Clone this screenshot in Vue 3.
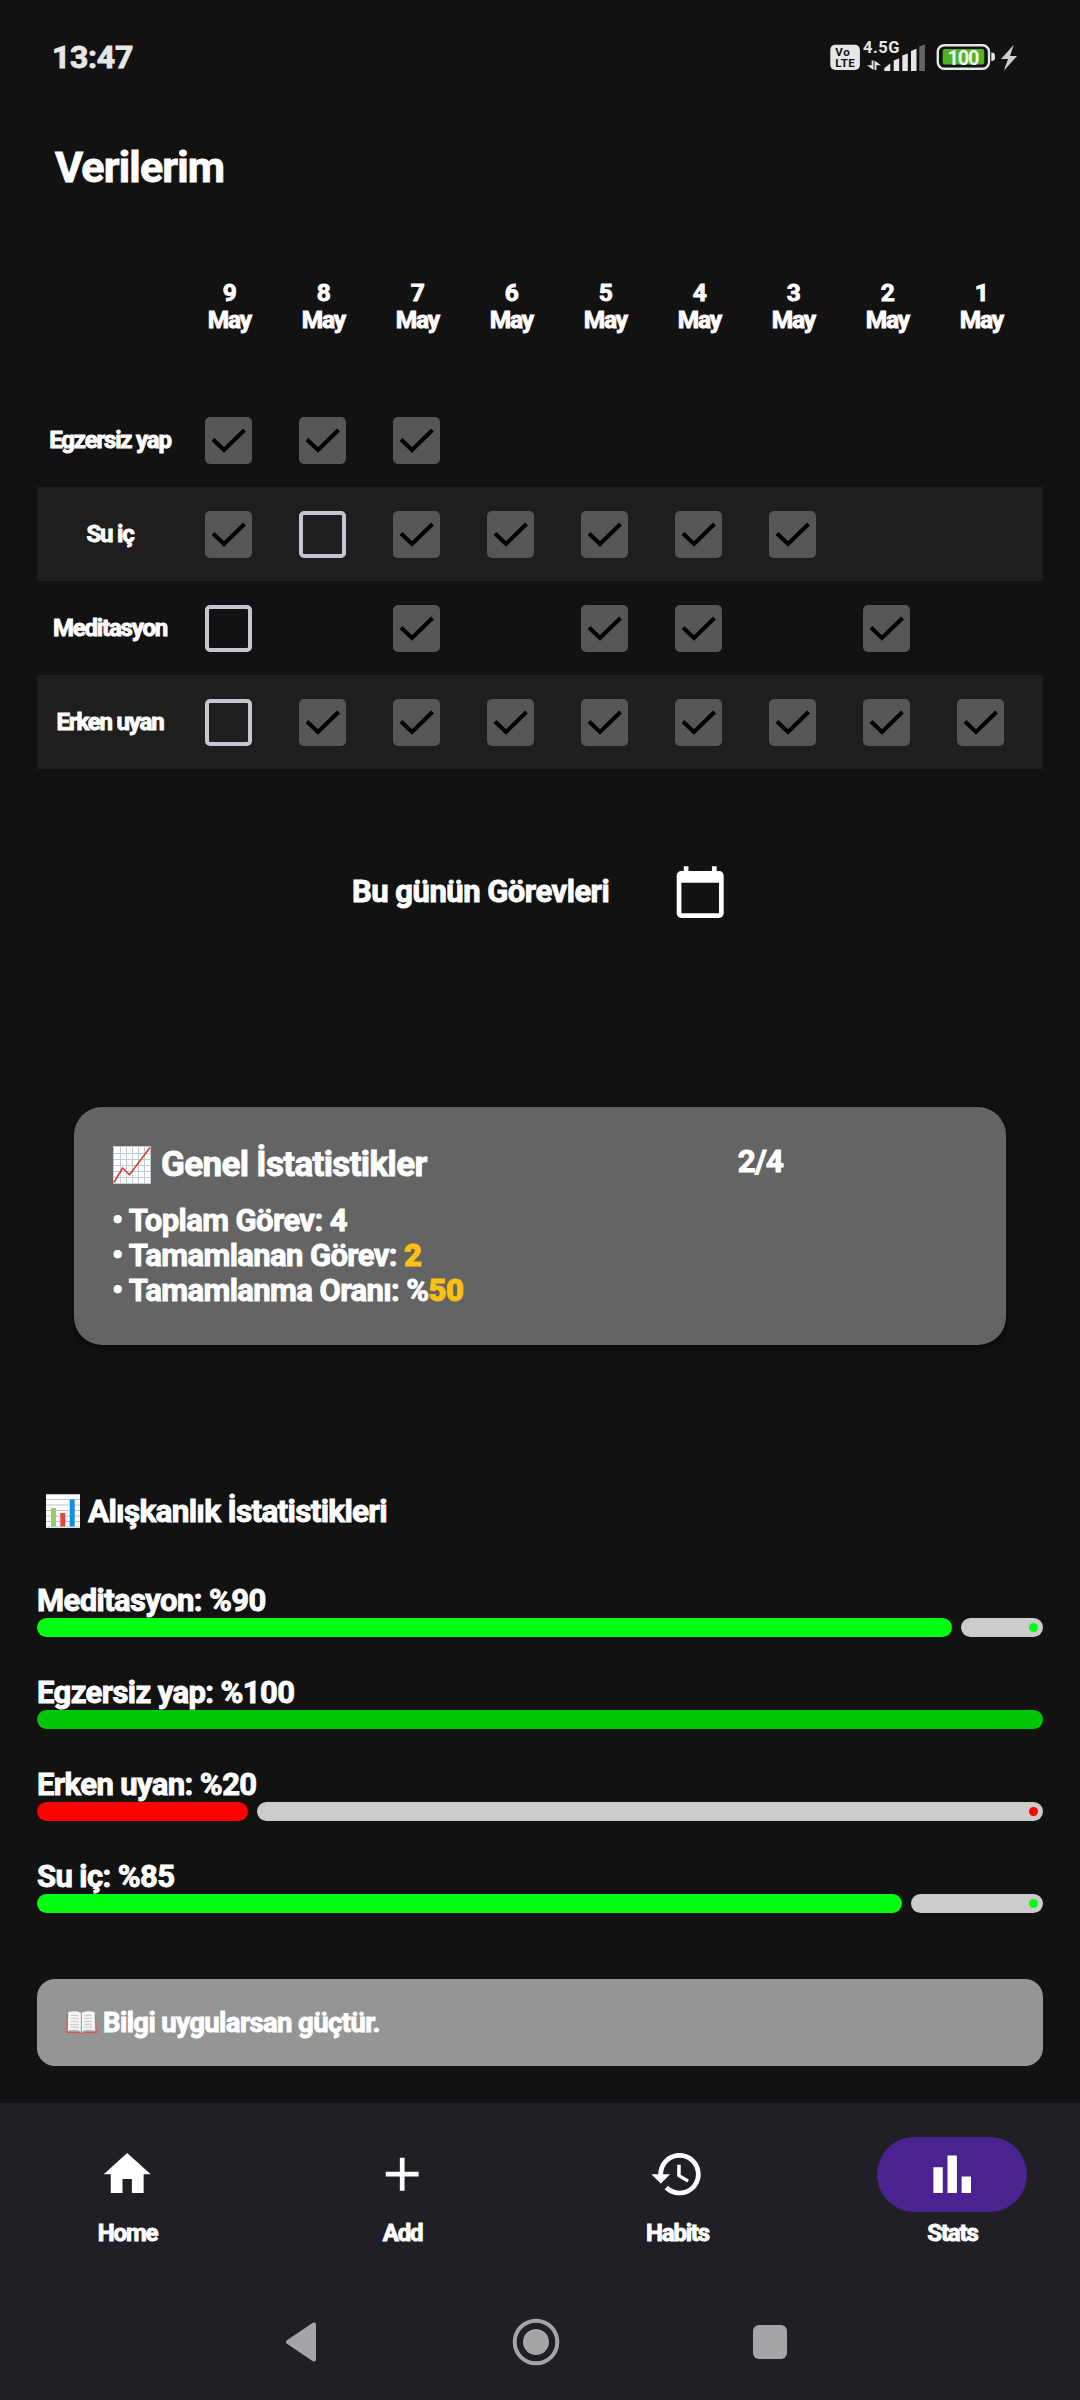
<script setup>
const days = [9, 8, 7, 6, 5, 4, 3, 2, 1]

// 1 = done, 0 = open, '-' = not scheduled
const habits = [
  { name: 'Egzersiz yap', marks: '111------' },
  { name: 'Su iç', marks: '1011111--' },
  { name: 'Meditasyon', marks: '0-1-11-1-' },
  { name: 'Erken uyan', marks: '011111111' },
]

const stats = [
  { name: 'Meditasyon', percent: 90, color: '#00ff11' },
  { name: 'Egzersiz yap', percent: 100, color: '#00c605' },
  { name: 'Erken uyan', percent: 20, color: '#ff0000' },
  { name: 'Su iç', percent: 85, color: '#00ff11' },
]

const fillWidth = (p) => (p === 100 ? '100%' : `calc(${p}% + 9.6px)`)

const tabs = [
  { label: 'Home', icon: 'M10 20v-6h4v6h5v-8h3L12 3 2 12h3v8z' },
  { label: 'Add', icon: 'M19 13h-6v6h-2v-6H5v-2h6V5h2v6h6v2z' },
  {
    label: 'Habits',
    icon: 'M13 3c-4.97 0-9 4.03-9 9H1l3.89 3.89.07.14L9 12H6c0-3.87 3.13-7 7-7s7 3.13 7 7-3.13 7-7 7c-1.93 0-3.68-.79-4.94-2.06l-1.42 1.42C8.27 19.99 10.51 21 13 21c4.97 0 9-4.03 9-9s-4.03-9-9-9zm-1 5v5l4.28 2.54.72-1.21-3.5-2.08V8H12z',
  },
  { label: 'Stats', icon: 'M4 9h4v11H4zM16 13h4v7h-4zM10 4h4v16h-4z', active: true },
]
</script>

<template>
  <div class="screen">
    <header class="status">
      <span class="clock">13:47</span>
      <svg class="status-icons" width="196" height="36" viewBox="826 38 196 36">
        <rect x="830.3" y="44.8" width="29.6" height="25.2" rx="5" fill="#e6e6e6" />
        <text class="lte" x="835.3" y="56.4" font-size="11.5" textLength="14.5">Vo</text>
        <text class="lte" x="835.3" y="67" font-size="11.5" textLength="19.5">LTE</text>
        <text class="net" x="863" y="53" font-size="16.5" textLength="36.6">4.5G</text>
        <path d="M871.6 60.5h1.9V70L867 65.300h4.600zM876.400 70h-1.900V60.500L881 65.200h-4.600z" fill="#e6e6e6" />
        <path d="M884.3 71v-3l6-4.4V71zM893.7 71V60.5l5.5-2.3V71zM902.3 71V55.5l5.5-2V71zM911 71V51l5.5-2.3V71z" fill="#e6e6e6" />
        <path d="M919.3 71V46.6l5.6-2.3V71z" fill="#666" />
        <rect x="937.8" y="45.2" width="51.2" height="23.6" rx="6.5" fill="none" stroke="#e6e6e6" stroke-width="2.4" />
        <rect x="942.7" y="49" width="41.6" height="15.6" rx="2" fill="#4fb31c" />
        <text class="charge" x="947.5" y="64.6" font-size="20" textLength="32">100</text>
        <path d="M991.3 52.6c2.5 0 3.6 1 3.6 2.5v3.5c0 1.5-1.1 2.5-3.6 2.5z" fill="#e6e6e6" />
        <path d="M1013.8 44.8L1001 59h7l-4.2 11.7L1017 56h-7z" fill="#cfcfcf" />
      </svg>
    </header>

    <h1 class="title">Verilerim</h1>

    <section class="table">
      <div class="row head">
        <span class="name"></span>
        <span v-for="d in days" :key="d" class="cell day"><span>{{ d }}</span><span>May</span></span>
      </div>
      <div v-for="(h, i) in habits" :key="h.name" class="row" :class="{ striped: i % 2 }">
        <span class="name">{{ h.name }}</span>
        <span v-for="(m, j) in h.marks" :key="j" class="cell">
          <span v-if="m === '1'" class="box done">
            <svg width="47" height="47" viewBox="0 0 47 47">
              <path d="M8 22.500L19 33L39.500 13" fill="none" stroke="#000" stroke-width="4" />
            </svg>
          </span>
          <span v-else-if="m === '0'" class="box open"></span>
        </span>
      </div>
    </section>

    <section class="today">
      <span class="today-text">Bu günün Görevleri</span>
      <svg width="56.4" height="56.4" viewBox="0 0 24 24">
        <path fill="#fff" d="M20 3h-1V1h-2v2H7V1H5v2H4c-1.1 0-2 .9-2 2v16c0 1.1.9 2 2 2h16c1.1 0 2-.9 2-2V5c0-1.1-.9-2-2-2zm0 18H4V8h16v13z" />
      </svg>
    </section>

    <section class="card">
      <div class="summary">
        <h2 class="card-title">
          <svg width="38" height="38" viewBox="0 0 38 38">
            <rect width="38" height="38" fill="#fff" />
            <path d="M.5 0v38M7.5 0v38M13.5 0v38M19.5 0v38M25.5 0v38M31.5 0v38M37.5 0v38M0 .5h38M0 7.5h38M0 13.5h38M0 19.5h38M0 25.5h38M0 31.5h38M0 37.5h38" stroke="#c3cbd0" stroke-width="1" />
            <path d="M1 36.5L9.5 22l7 6.8L37 1.5" fill="none" stroke="#db4437" stroke-width="1.7" />
          </svg>
          <span>Genel İstatistikler</span>
        </h2>
        <ul class="lines">
          <li>Toplam Görev: 4</li>
          <li>Tamamlanan Görev: <b>2</b></li>
          <li>Tamamlanma Oranı: %<b>50</b></li>
        </ul>
      </div>
      <span class="ratio">2/4</span>
    </section>

    <h2 class="section-title">
      <svg width="34" height="34" viewBox="0 0 34 34">
        <rect width="34" height="34" fill="#fff" />
        <path d="M0 .5h34M0 5.5h34M0 11h34M0 16.5h34M0 22h34M0 27.5h34M0 33h34" stroke="#b8c4c8" stroke-width="1" />
        <path d="M5 14h5v18.5H5z" fill="#9ccc65" />
        <path d="M14.3 19h5v13.5h-5z" fill="#e8453c" />
        <path d="M23.7 5.5h5v27h-5z" fill="#0f8fe6" />
      </svg>
      <span>Alışkanlık İstatistikleri</span>
    </h2>

    <section class="stats">
      <div v-for="s in stats" :key="s.name" class="stat">
        <span class="stat-name">{{ s.name }}: %{{ s.percent }}</span>
        <div class="bar">
          <span class="fill" :style="{ width: fillWidth(s.percent), background: s.color }"></span>
          <span v-if="s.percent < 100" class="rest"><i :style="{ background: s.color }"></i></span>
        </div>
      </div>
    </section>

    <section class="tip">
      <svg width="31" height="23" viewBox="0 0 31 23">
        <path d="M1 3L0 22h13c1 1 4 1 5 0h13L29.5 3z" fill="#d8574f" />
        <path d="M2 2L1.500 20.500h11.500l2.500 1.500l2.500-1.500h11.500L29 2z" fill="#a9c6cf" />
        <path d="M2.500 1C7 0 12 0 15.300 2C19 0 24 0 28.500 1L29 19.500C24 18.500 19 18.500 15.500 20.500C12 18.500 7 18.500 2 19.500z" fill="#f6f6f6" />
        <path d="M15.400 2v18.500" stroke="#90aab2" stroke-width="1.2" />
        <path d="M5 4.500q4-1 8 .5M5 7.500q4-1 8 .5M4.700 10.500q4-1 8.300.5M4.700 13.500q4-1 8.300.5M4.500 16.300q4-1 8.500.5M18 5q4-1.500 8-.5M18 8q4-1.500 8-.5M18 11q4-1.500 8.300-.5M18 14q4-1.500 8.300-.5M18 16.800q4-1.500 8.500-.5" fill="none" stroke="#c4c4c4" stroke-width="1" />
      </svg>
      <span>Bilgi uygularsan güçtür.</span>
    </section>

    <footer class="bottom">
      <nav class="tabs">
        <div v-for="t in tabs" :key="t.label" class="tab">
          <span class="pill" :class="{ active: t.active }">
            <svg width="56.4" height="56.4" viewBox="0 0 24 24"><path :d="t.icon" fill="#fff" /></svg>
          </span>
          <span class="tab-label">{{ t.label }}</span>
        </div>
      </nav>
      <div class="system">
        <svg width="32" height="48" viewBox="0 0 32 48">
          <path d="M3 24L29 6.5V41.5z" fill="#a5a5a7" stroke="#a5a5a7" stroke-width="4" stroke-linejoin="round" />
        </svg>
        <svg class="home-button" width="48" height="48" viewBox="0 0 48 48">
          <circle cx="24" cy="24" r="21.3" fill="none" stroke="#a5a5a7" stroke-width="4" />
          <circle cx="24" cy="24" r="13" fill="#a5a5a7" />
        </svg>
        <svg width="34" height="34" viewBox="0 0 34 34"><rect width="34" height="34" rx="6" fill="#a5a5a7" /></svg>
      </div>
    </footer>
  </div>
</template>

<style>
body {
  background: #121212;
}
</style>

<style scoped>
.screen {
  box-sizing: border-box;
  width: 1080px;
  height: 2400px;
  overflow: hidden;
  display: flex;
  flex-direction: column;
  background: #121212;
  color: #fff;
  font-family: Roboto, "Noto Sans", sans-serif;
  font-weight: 700;
  letter-spacing: -0.6px;
  -webkit-text-stroke: 0.9px currentColor;
}
svg {
  display: block;
  flex: none;
}
h1,
h2,
ul {
  margin: 0;
  padding: 0;
  font-weight: 700;
}
.status {
  box-sizing: border-box;
  height: 142px;
  padding: 38px 58px 0 52px;
  display: flex;
  justify-content: space-between;
  align-items: flex-start;
  color: #e6e6e6;
}
.clock {
  font-size: 32px;
  line-height: 38px;
  letter-spacing: -0.3px;
}
.status-icons text {
  font-weight: 700;
  letter-spacing: 0;
  -webkit-text-stroke: 0;
}
.lte {
  fill: #121212;
}
.net {
  fill: #e6e6e6;
}
.charge {
  fill: #f2f2f2;
}
.title {
  margin-left: 55px;
  font-size: 43px;
  line-height: 50px;
  letter-spacing: -0.8px;
}
.table {
  margin: 87px 37px 0;
  letter-spacing: -1.2px;
}
.row {
  display: flex;
  align-items: center;
  height: 94px;
  font-size: 24px;
}
.head {
  height: 114px;
  align-items: flex-start;
  font-size: 24.5px;
}
.striped {
  background: #1e1e1e;
}
.name {
  box-sizing: border-box;
  width: 144px;
  padding-left: 2px;
  text-align: center;
  white-space: nowrap;
}
.cell {
  width: 94px;
  display: flex;
  justify-content: center;
}
.day {
  box-sizing: border-box;
  flex-direction: column;
  align-items: center;
  padding-left: 2.5px;
  line-height: 27px;
}
.box {
  box-sizing: border-box;
  width: 47px;
  height: 47px;
  border-radius: 5px;
}
.done {
  background: #565656;
}
.open {
  border: 4px solid #cac4d0;
}
.today {
  display: flex;
  align-items: center;
  margin: 95px 0 0 352px;
  height: 56px;
}
.today-text {
  width: 320px;
  font-size: 31px;
  line-height: 36px;
  letter-spacing: -0.5px;
}
.card {
  box-sizing: border-box;
  display: flex;
  justify-content: space-between;
  margin: 187px 74px 0;
  height: 238px;
  padding: 37px 223px 0 39px;
  border-radius: 28px;
  background: #646464;
  box-shadow: 0 3px 8px rgba(0, 0, 0, 0.5);
}
.card-title {
  display: flex;
  align-items: center;
  gap: 10px;
  height: 41px;
  font-size: 35px;
  letter-spacing: -0.65px;
}
.lines {
  margin: 17.5px 0 0 -1px;
  list-style: none;
  font-size: 31px;
  line-height: 35px;
}
.lines li::before {
  content: "• ";
}
.lines b {
  color: #fdc010;
}
.ratio {
  font-size: 31.5px;
  line-height: 36px;
  letter-spacing: -0.9px;
}
.section-title {
  display: flex;
  align-items: center;
  gap: 8px;
  height: 36px;
  margin: 148px 0 0 46px;
  font-size: 31.5px;
  letter-spacing: -0.7px;
}
.stats {
  margin: 52px 37px 0;
}
.stat {
  height: 92px;
}
.stat-name {
  display: block;
  padding-top: 3px;
  font-size: 31px;
  line-height: 34px;
}
.bar {
  display: flex;
  gap: 9.4px;
  height: 19px;
}
.fill {
  flex: none;
  border-radius: 9.5px;
}
.rest {
  flex: 1;
  display: flex;
  align-items: center;
  justify-content: flex-end;
  padding-right: 4.7px;
  border-radius: 9.5px;
  background: #ccc;
}
.rest i {
  width: 9.6px;
  height: 9.6px;
  border-radius: 50%;
}
.tip {
  display: flex;
  align-items: center;
  gap: 6px;
  box-sizing: border-box;
  height: 87px;
  margin: 30px 37px 0;
  padding-left: 29px;
  border-radius: 18px;
  background: #959595;
  font-size: 27.5px;
}
.bottom {
  margin-top: auto;
  height: 297px;
  background: #201f25;
}
.tabs {
  display: flex;
  gap: 18.8px;
  margin-left: -1px;
  padding-top: 33.5px;
}
.tab {
  flex: 1;
  display: flex;
  flex-direction: column;
  align-items: center;
}
.pill {
  display: flex;
  align-items: center;
  justify-content: center;
  width: 150px;
  height: 75px;
  border-radius: 37.5px;
}
.active {
  background: #4a2390;
}
.tab-label {
  margin-top: 7px;
  padding-left: 1px;
  font-size: 24px;
  line-height: 29px;
  letter-spacing: -1.2px;
}
.system {
  display: flex;
  align-items: center;
  margin: 70.5px 0 0 285px;
  height: 48px;
}
.home-button {
  margin: 0 193px 0 195px;
}
</style>
